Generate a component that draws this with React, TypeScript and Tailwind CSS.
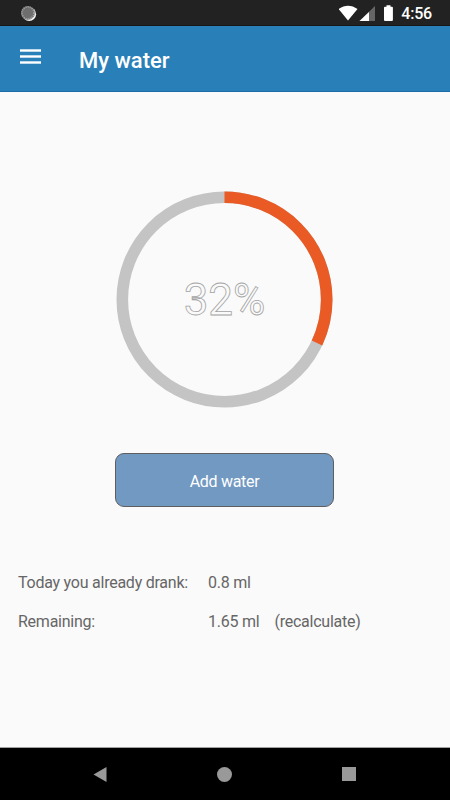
const PERCENT = 32;

const StatusBar = () => {
  return (
    <div className="flex h-[26px] shrink-0 items-center justify-between border-b border-[#181818] bg-[#222222] pl-5 pr-[18px]">
      <svg className="mt-px" width="17" height="17" viewBox="0 0 17 17">
        <circle cx="9.2" cy="9.2" r="6.9" fill="#f2f2f2" />
        <circle cx="7.9" cy="7.9" r="6.9" fill="#6e6e6e" />
        <circle cx="7.9" cy="7.9" r="6" fill="none" stroke="#a8a8a8" strokeWidth="1.6" strokeDasharray="1 1.1" />
      </svg>
      <div className="flex items-center">
        <svg className="mt-px" width="54" height="17" viewBox="0 0 54 17" fill="#ffffff">
          <path d="M-0.5 4 C5.5 -0.5 12.5 -0.5 18.5 4 L9 15.5 Z" />
          <path d="M36 1 V16 H20.5 Z" fill="#666666" />
          <path d="M30 7 V16 H20.5 Z" />
          <path d="M47.5 0.3 h4 v1.5 h1.4 a1 1 0 0 1 1 1 V15 a1 1 0 0 1 -1 1 H46 a1 1 0 0 1 -1 -1 V2.8 a1 1 0 0 1 1 -1 H47.5 Z" />
        </svg>
        <span className="ml-2 mt-[3px] text-[16px] font-medium leading-5 tracking-[-0.2px] text-white">4:56</span>
      </div>
    </div>
  );
};

const Header = () => {
  return (
    <header className="flex h-[66px] shrink-0 items-center border-b border-[#1b6ca8] bg-[#2980b9] pl-5">
      <button className="mb-1" aria-label="Menu">
        <svg className="block" width="21" height="15" viewBox="0 0 21 15" fill="#ffffff">
          <rect y="0.3" width="21" height="2.4" />
          <rect y="6.3" width="21" height="2.4" />
          <rect y="12.3" width="21" height="2.4" />
        </svg>
      </button>
      <h1 className="ml-[38px] mt-[5px] text-[22px] font-medium leading-7 text-white">My water</h1>
    </header>
  );
};

const ProgressRing = ({ percent }: { percent: number }) => {
  return (
    <svg className="mr-0.5 mt-[99px] block" width="217" height="217" viewBox="0 0 217 217">
      <circle cx="108.5" cy="108.5" r="102.2" fill="none" stroke="#c4c4c4" strokeWidth="11.6" />
      <circle
        cx="108.5"
        cy="108.5"
        r="102.2"
        fill="none"
        stroke="#e95a24"
        strokeWidth="11.6"
        pathLength="100"
        strokeDasharray={`${percent} 100`}
        transform="rotate(-90 108.5 108.5)"
      />
      <text
        x="108.5"
        y="123.5"
        textAnchor="middle"
        fontSize="44"
        className="fill-[#fafafa] stroke-[#a3a3a3] font-normal"
        strokeWidth="0.8"
      >
        {percent}%
      </text>
    </svg>
  );
};

const NavigationBar = () => {
  return (
    <nav className="flex h-[53px] shrink-0 items-center justify-between border-t border-[#a0a0a0] bg-black pl-[93px] pr-[94px]">
      <svg width="14" height="15" viewBox="0 0 14 15">
        <path d="M0.5 7.5 L13.5 0 V15 Z" fill="#999999" />
      </svg>
      <span className="size-[15px] rounded-full bg-[#999999]" />
      <span className="size-[14px] bg-[#999999]" />
    </nav>
  );
};

export default function App() {
  return (
    <div className="flex h-[800px] w-[450px] flex-col bg-[#fafafa] font-[Roboto,sans-serif]">
      <StatusBar />
      <Header />
      <main className="flex flex-1 flex-col items-center">
        <ProgressRing percent={PERCENT} />
        <button className="mr-px mt-[45px] h-[54px] w-[219px] rounded-[9px] border border-[#5e5e5e] bg-[#7299c2] pt-[3px] text-[16px] tracking-[-0.3px] text-white">
          Add water
        </button>
        <div className="mt-16 flex w-full flex-col gap-[15px] pl-[18px] text-[16px] leading-6 tracking-[-0.24px] text-[#666666]">
          <div className="flex">
            <span className="w-[190px]">Today you already drank:</span>
            <span>0.8 ml</span>
          </div>
          <div className="flex">
            <span className="w-[190px]">Remaining:</span>
            <span>1.65 ml</span>
            <span className="ml-[15px]">(recalculate)</span>
          </div>
        </div>
      </main>
      <NavigationBar />
    </div>
  );
}
